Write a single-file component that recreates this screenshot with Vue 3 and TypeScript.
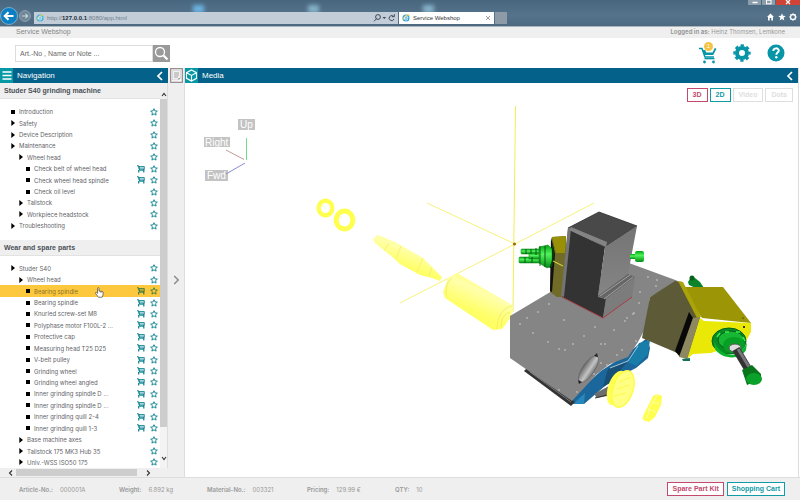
<script setup lang="ts">
import { ref } from 'vue'

interface TreeItem {
  label: string
  level: 1 | 2 | 3
  leaf?: boolean
  cart?: boolean
  active?: boolean
}

const search = ref('')
const address = 'app.html'

const manual: TreeItem[] = [
  { label: 'Introduction', level: 1, leaf: true },
  { label: 'Safety', level: 1 },
  { label: 'Device Description', level: 1 },
  { label: 'Maintenance', level: 1 },
  { label: 'Wheel head', level: 2 },
  { label: 'Check belt of wheel head', level: 3, leaf: true, cart: true },
  { label: 'Check wheel head spindle', level: 3, leaf: true, cart: true },
  { label: 'Check oil level', level: 3, leaf: true },
  { label: 'Tailstock', level: 2 },
  { label: 'Workpiece headstock', level: 2 },
  { label: 'Troubleshooting', level: 1 },
]

const part = (label: string, active = false): TreeItem => ({ label, level: 3, leaf: true, cart: true, active })

const parts: TreeItem[] = [
  { label: 'Studer S40', level: 1 },
  { label: 'Wheel head', level: 2 },
  part('Bearing spindle', true),
  part('Bearing spindle'),
  part('Knurled screw-set M8'),
  part('Polyphase motor F100L-2 ...'),
  part('Protective cap'),
  part('Measuring head T25 D25'),
  part('V-belt pulley'),
  part('Grinding wheel'),
  part('Grinding wheel angled'),
  part('Inner grinding spindle D ...'),
  part('Inner grinding spindle D ...'),
  part('Inner grinding quill 2-4'),
  part('Inner grinding quill 1-3'),
  { label: 'Base machine axes', level: 2 },
  { label: 'Tailstock 175 MK3 Hub 35', level: 2 },
  { label: 'Univ.-WSS ISO50 175', level: 2 },
]

const sections = [
  { title: 'Studer S40 grinding machine', items: manual, kind: 'manual' },
  { title: 'Wear and spare parts', items: parts, kind: 'parts' },
]

const modes = [
  { label: '3D', kind: 'pink' },
  { label: '2D', kind: 'teal' },
  { label: 'Video', kind: 'off' },
  { label: 'Dots', kind: 'off' },
]

const details = [
  { term: 'Article-No.:', value: '000001A', kind: 'd-article' },
  { term: 'Weight:', value: '6.892 kg', kind: 'd-weight' },
  { term: 'Material-No.:', value: '003321', kind: 'd-material' },
  { term: 'Pricing:', value: '129.99 €', kind: 'd-price' },
  { term: 'QTY:', value: '10', kind: 'd-qty' },
]

const specks: [number, number][] = [
  [527, 318], [538, 312], [533, 333], [549, 304], [564, 320], [548, 342], [559, 349], [573, 344], [565, 350],
  [584, 336], [595, 327], [601, 344], [605, 344], [614, 330], [625, 321], [633, 314], [617, 355], [601, 363],
  [640, 292], [648, 277], [657, 280], [636, 341], [622, 350], [577, 392], [559, 390], [607, 365], [639, 303],
  [656, 286], [520, 324], [594, 374], [627, 318], [634, 313],
]
</script>

<template>
  <div class="page">
    <header class="chrome">
      <i class="blob b1"></i><i class="blob b2"></i><i class="blob b3"></i>
      <button class="back" aria-label="Back">
        <svg viewBox="0 0 18 18"><circle cx="9" cy="9" r="8.5" fill="#0b7fc3" stroke="#a9cfe6" stroke-width=".6" /><path d="M13.5 9H5M8.5 5.2 4.7 9l3.8 3.8" fill="none" stroke="#fff" stroke-width="2" /></svg>
      </button>
      <button class="forward" aria-label="Forward">
        <svg viewBox="0 0 12 12"><circle cx="6" cy="6" r="5.4" fill="#6f8796" stroke="#9aabb8" stroke-width=".8" /><path d="M3 6h5.5M6.5 3.8 8.7 6 6.5 8.2" fill="none" stroke="#cbd5dc" stroke-width="1.1" /></svg>
      </button>
      <div class="address">
        <svg class="globe" viewBox="0 0 9 9"><circle cx="4.5" cy="4.5" r="4" fill="#3fb0d8" /><path d="M1 6.2C3 2.6 6 1 8.4 1.2" fill="none" stroke="#e9c545" stroke-width="1.1" /><path d="M2.3 4.6h4.4c0-3-4.2-3-4.2 0 0 2.6 3 2.8 4 1.3" fill="none" stroke="#e9f6fb" stroke-width="1" /></svg>
        <span class="url">http://<b>127.0.0.1</b>:8080/{{ address }}</span>
        <svg class="tools" viewBox="0 0 24 10" fill="none" stroke="#3c4a57"><circle cx="6" cy="4" r="2.4" /><path d="M4.4 5.8 2 8.4" /><path d="M10.5 4h3.6l-1.8 2z" fill="#3c4a57" stroke="none" /><path d="M21.3 3.2A2.5 2.5 0 1 0 22 6" /><path d="M22.3 1.2v2.5h-2.5" /></svg>
      </div>
      <div class="tab">
        <svg class="globe" viewBox="0 0 9 9"><circle cx="4.5" cy="4.5" r="4" fill="#2f9fd0" /><path d="M1 6.2C3 2.6 6 1 8.4 1.2" fill="none" stroke="#e9b93c" stroke-width="1.2" /><path d="M2.3 4.6h4.4c0-3-4.2-3-4.2 0 0 2.6 3 2.8 4 1.3" fill="none" stroke="#fff" /></svg>
        <span>Service Webshop</span>
        <button class="tab-close" aria-label="Close tab"><svg viewBox="0 0 6 6"><path d="m1 1 4 4M5 1 1 5" stroke="#888" stroke-width=".8" /></svg></button>
      </div>
      <button class="new-tab" aria-label="New tab"></button>
      <div class="window">
        <div class="win-buttons">
          <button class="win" aria-label="Minimize"><svg viewBox="0 0 12 6"><path d="M4 3.5h5" stroke="#fff" stroke-width="1.5" /></svg></button>
          <button class="win" aria-label="Maximize"><svg viewBox="0 0 12 6"><rect x="4" y="1.2" width="4.5" height="3.6" fill="none" stroke="#fff" /></svg></button>
          <button class="win close" aria-label="Close"><svg viewBox="0 0 12 6"><path d="m4 1 4 4M8 1 4 5" stroke="#fff" stroke-width="1.2" /></svg></button>
        </div>
        <svg class="quick" viewBox="0 0 30 8" fill="#fff"><path d="M0 4 3.5.5 7 4H6v3.500H4.300V5H2.700v2.500H1V4z" /><path d="m15 .3 1 2.500 2.700.2-2.100 1.700.7 2.700L15 5.900l-2.300 1.500.7-2.700L11.300 3l2.700-.2z" /><circle cx="26" cy="4" r="2.5" fill="none" stroke="#fff" stroke-width="1.3" /><path d="M26 .3v1.200M26 6.500v1.200M22.300 4h1.200M28.500 4h1.200M23.400 1.400l.8.8M27.800 5.800l.8.8M28.600 1.400l-.8.8M24.200 5.800l-.8.8" stroke="#fff" /></svg>
      </div>
    </header>

    <div class="titlebar">
      <h1>Service Webshop</h1>
      <p><b>Logged in as:</b> Heinz Thomsen, Lemkone</p>
    </div>

    <div class="header">
      <form class="search" @submit.prevent>
        <input v-model="search" aria-label="Search" placeholder="Art.-No , Name or Note ..." />
        <button aria-label="Search"><svg viewBox="0 0 17 17"><circle cx="7" cy="7" r="4.5" fill="none" stroke="#fff" stroke-width="1.3" /><path d="m10.5 10.5 4 4" stroke="#fff" stroke-width="2.3" /></svg></button>
      </form>
      <div class="actions">
        <button class="cart" aria-label="Cart">
          <svg viewBox="0 0 18 22"><path d="M0 6.500h3l3 8.500h9" fill="none" stroke="#0795a8" stroke-width="1.600" /><path d="M3.200 8h3l1 2.500h6.300L15.800 6l1.700.8-3.300 6.200H5.200z" fill="#0795a8" /><path d="M5.500 16.600h10" stroke="#0795a8" stroke-width="1.400" /><circle cx="5.500" cy="20" r="1.400" fill="#0795a8" /><circle cx="14.500" cy="20" r="1.400" fill="#0795a8" /></svg>
          <span class="badge">1</span>
        </button>
        <button aria-label="Settings">
          <svg viewBox="0 0 18 18"><circle cx="9" cy="9" r="5" fill="none" stroke="#0795a8" stroke-width="4" /><circle cx="9" cy="9" r="7.5" fill="none" stroke="#0795a8" stroke-width="2.4" stroke-dasharray="3.3 2.59" stroke-dashoffset="1.65" /></svg>
        </button>
        <button aria-label="Help">
          <svg viewBox="0 0 18 18"><circle cx="9" cy="9" r="8.5" fill="#0795a8" /><path d="M6.3 7c0-3.6 5.500-3.400 5.500-.4 0 2-2.500 2-2.500 4.200" fill="none" stroke="#fff" stroke-width="1.9" /><circle cx="9.3" cy="13.2" r="1.2" fill="#fff" /></svg>
        </button>
      </div>
    </div>

    <div class="body">
      <aside class="sidebar">
        <div class="bar">
          <button class="bar-icon" aria-label="Menu"><svg viewBox="0 0 13 15"><path d="M2.5 4h9M2.5 7.500h9M2.500 11h9" stroke="#fff" stroke-width="1.7" /></svg></button>
          <h2>Navigation</h2>
          <button class="collapse" aria-label="Collapse navigation"><svg viewBox="0 0 8 10"><path d="M6 1 2 5l4 4" fill="none" stroke="#fff" stroke-width="1.7" /></svg></button>
        </div>
        <div class="tree-wrap">
          <nav class="tree">
            <template v-for="section in sections" :key="section.kind">
              <h3>{{ section.title }}</h3>
              <ul :class="section.kind">
                <li v-for="(item, i) in section.items" :key="i" :class="['level-' + item.level, { active: item.active }]">
                  <svg class="marker" viewBox="0 0 4 6"><rect v-if="item.leaf" y="1" width="4" height="4" /><path v-else d="M.3 0 4 3 .3 6z" /></svg>
                  <a href="#">{{ item.label }}</a>
                  <button v-if="item.cart" class="mini" aria-label="Add to cart"><svg viewBox="0 0 8 8"><path d="M0 .8h1.500L2.500 5.200h4.300" fill="none" stroke="currentColor" stroke-width="1" /><path d="M1.800 1.500h5.500v2.700H2.400z" fill="currentColor" fill-opacity=".35" stroke="currentColor" stroke-width=".8" /><path d="M1.700 5v2.500M6.800 4v3.500" stroke="currentColor" stroke-width="1.200" /></svg></button>
                  <button class="mini" aria-label="Favourite"><svg viewBox="0 0 8 8"><path d="m4 .7.95 2.200 2.400.2-1.800 1.600.55 2.400L4 5.850 1.900 7.100l.55-2.400L.65 3.100l2.400-.2z" fill="none" stroke="currentColor" stroke-width=".9" /></svg></button>
                  <svg v-if="item.active" class="hand" viewBox="0 0 9 11"><path d="M2.600 6.300V1.400c0-1 1.400-1 1.400 0V4l3.200.5c.8.200 1 .6 1 1.300 0 1.700-.3 3-1 4.400H3.400C2.600 9 1.300 7.500.5 6.300c-.3-.8.6-1.200 1.200-.7z" fill="#fff" stroke="#444" stroke-width=".7" /><path d="M5.400 4.500v1.200M6.800 4.600v1.200" stroke="#444" stroke-width=".5" /></svg>
                </li>
              </ul>
            </template>
          </nav>
          <div class="vscroll">
            <svg viewBox="0 0 6 5"><path d="M1 4l2-2.500L5 4" fill="none" stroke="#333" stroke-width="1.1" /></svg>
            <i></i>
            <svg viewBox="0 0 6 5"><path d="M1 1l2 2.500L5 1" fill="none" stroke="#333" stroke-width="1.1" /></svg>
          </div>
        </div>
        <div class="hscroll">
          <svg viewBox="0 0 5 6"><path d="M4 .5 1.500 3 4 5.500" fill="none" stroke="#333" stroke-width="1.1" /></svg>
          <i></i>
          <svg viewBox="0 0 5 6"><path d="M1 .5 3.500 3 1 5.500" fill="none" stroke="#333" stroke-width="1.1" /></svg>
        </div>
      </aside>

      <div class="divider">
        <button class="note" aria-label="Notes"><svg viewBox="0 0 13 15"><rect x=".7" y=".7" width="11.6" height="13.6" fill="#fff" stroke="#8f8489" stroke-width="1.2" /><path d="M2.500 2.500h8v7.500l-2 2h-6z" fill="#f1f1f1" stroke="#bbb" stroke-width=".5" /><path d="M4 5h5M4 7h5M4 9h4" stroke="#999" stroke-width=".9" /><path d="M8.500 12v-2h2z" fill="#888" /></svg></button>
        <button class="expand" aria-label="Expand"><svg viewBox="0 0 7 10"><path d="m1.200 1 4 4-4 4" fill="none" stroke="#8b8b8b" stroke-width="1.5" /></svg></button>
      </div>

      <main class="media">
        <div class="bar">
          <div class="bar-icon"><svg viewBox="0 0 13 15"><path d="m6.500 2 5 2.700v5.600l-5 2.700-5-2.700V4.700zM1.500 4.700l5 2.700 5-2.700M6.500 7.400V13" fill="none" stroke="#fff" stroke-width="1.1" /></svg></div>
          <h2>Media</h2>
          <button class="collapse" aria-label="Collapse media"><svg viewBox="0 0 8 10"><path d="M6 1 2 5l4 4" fill="none" stroke="#fff" stroke-width="1.7" /></svg></button>
        </div>
        <div class="stage">
          <svg class="scene" viewBox="185 83 613 394" role="img" aria-label="Exploded view of the wheel head">
            <defs>
              <linearGradient id="tube" x1="0" y1="1" x2=".55" y2="0"><stop offset="0" stop-color="#ffff4c" /><stop offset=".45" stop-color="#ffff68" /><stop offset=".75" stop-color="#ffffac" /><stop offset="1" stop-color="#ffff66" /></linearGradient>
              <linearGradient id="bore"><stop offset="0" stop-color="#666" /><stop offset=".6" stop-color="#c4c4c4" /><stop offset="1" stop-color="#777" /></linearGradient>
              <linearGradient id="bright" x1="0" y1="0" x2="0" y2="1"><stop offset="0" stop-color="#00a414" /><stop offset=".4" stop-color="#52f35d" /><stop offset="1" stop-color="#008d12" /></linearGradient>
              <linearGradient id="side" x1="0" y1="0" x2="0" y2="1"><stop offset="0" stop-color="#747474" /><stop offset="1" stop-color="#858585" /></linearGradient>
            </defs>

            <g class="triad">
              <rect x="238" y="119" width="17" height="11" /><rect x="204" y="137" width="26" height="10" /><rect x="205" y="170" width="23" height="11" />
              <text x="240" y="128">Up</text><text x="205" y="146">Right</text><text x="207" y="179">Fwd</text>
              <path d="M246.500 138v22" stroke="#6fdd8a" /><path d="m226 150 18 9.500" stroke="#c59a9a" /><path d="m226 174 19-11" stroke="#8c8cd4" />
            </g>

            <g stroke="#f3ec3c" stroke-width=".9" fill="none"><path d="M515.500 106 513 312" /><path d="m427 203 88 41M400 303l115-59 79-41" stroke-opacity=".75" /></g>

            <g fill="none" stroke="#ffff50"><ellipse cx="325.500" cy="208" rx="6.800" ry="7.300" stroke-width="4.400" /><ellipse cx="344.500" cy="220" rx="8.300" ry="9" stroke-width="5" /><path d="M319 203l5 4M337 214l5 4M345 231l4-5" stroke="#f3f28a" stroke-width=".6" /></g>
            <path d="m373 239 4-4 6 2 14 6 26 15 9 9 10 10-2 4-8-3-12-3-20-11-10-9-15-12z" fill="url(#tube)" />
            <path d="m389 243-5 8M401 246l-5 13M423 258l-6 14M432 267l-3 9" stroke="#f1ec65" stroke-width=".7" fill="none" />
            <path d="m443 292 5-14 9-5 55 32v11l-10 13-9 1-48-32z" fill="url(#tube)" />
            <path d="M512 306c-10 2-15 12-15 23M452 278c-5 4-6 9-6 17M510 312c-8 3-9 9-9 15" stroke="#eeea61" stroke-width=".8" fill="none" />

            <path d="m647 338 3 10-2 10-12 10-24 12-28 24h-13l2-8 28-25 18-12 14-10z" fill="#1b669a" />
            <path d="m639 343 11-3-2 14-12 12-8-4z" fill="#187da9" /><path d="m608 369 20-8-18 22-7 4z" fill="#174f76" /><path d="m573 404 12-11-1 11z" fill="#2888bd" />
            <path d="m594 394 15-8-2 10-10 2z" fill="#6d6d6d" /><path d="m595 398 12-3" stroke="#333" />
            <path d="M524 371 571 406l4-4-47-35z" fill="#333" /><path d="m530 372 41 30" stroke="#777" />
            <path d="m510 316 42-25 77-28 49 18-28 16-4 30-8 15-10 15-18 7-13 10-25 27-62-43z" fill="#858585" />
            <path d="m610 368 18-7 10-15" fill="none" stroke="#a9c5d4" />
            <ellipse cx="588.500" cy="369" rx="6" ry="15.500" transform="rotate(34 588.500 369)" fill="url(#bore)" stroke="#555" stroke-width=".5" />
            <path d="m594 356 3-3 1 4zM578 380l1 4 3-2z" fill="#222" />
            <circle v-for="(s, i) in specks" :key="i" :cx="s[0]" :cy="s[1]" r=".8" fill="#d4d4d4" />

            <path d="m552 237 14-1 2 61h-11l-7-5z" fill="#716b28" /><path d="m552 237 14-1-1 17h-9z" fill="#989107" /><path d="m551 237 4 17-3 38-2-1z" fill="#111" />
            <g fill="url(#bright)" stroke="#087e17" stroke-width=".5"><rect x="521" y="249" width="25" height="5" rx="1" /><rect x="519" y="257" width="28" height="6" rx="1" /><rect x="529" y="253" width="18" height="6" /><path d="m539 247 9-2 4 4v17l-5 2-8-5z" /></g>
            <path d="M526 249v5M531 249v5M536 248v7M525 257v6M532 257v6M540 246v20M545 246v21" stroke="#064d0d" stroke-width=".9" />
            <path d="M552 245c2 6 2 15-2 23" stroke="#073b0b" stroke-width="1.5" fill="none" /><path d="m553 261 10 5" stroke="#e7e342" />
            <path d="m568 228 31-16 38 14-32 21z" fill="#494949" stroke="#2d2d2d" stroke-width=".8" />
            <path d="m568 229 37 18-7 50 8 2-3 19-41-21z" fill="#333" />
            <path d="m568 227 3 2-7 68-3-1z" fill="#747474" /><path d="m571 227 36 15-1 5-37-17z" fill="#848484" />
            <path d="m605 247 32-21-9 48-30 22z" fill="url(#side)" /><path d="m598 296 30-22 7 3-29 22z" fill="#656565" /><path d="m600 296 30-21M604 299l29-22" stroke="#a7a7a7" stroke-width=".9" />
            <path d="m606 299 29-22-3 20-29 21z" fill="#7c7c7c" /><path d="m562 297 41 21 29-21" fill="none" stroke="#a93c42" />
            <g fill="url(#bright)"><rect x="630" y="254" width="6" height="5" /><rect x="635" y="251" width="9" height="11" rx="2" /></g>

            <path d="m688 282 3-5 4 1 5 4 4 6-6 1-9-4z" fill="#0a832a" /><circle cx="692" cy="278" r="2.500" fill="#07601c" />
            <path d="m680 287 43 0 28 36-49-5z" fill="#9c9607" />
            <path d="m699 317 5 4 47 2v9l-5 9-35 12-18 1-6 5z" fill="#e9e806" />
            <path d="m650 297 25-16 7 1 18 35-13 42-12-7-33-14z" fill="#5d5a37" /><path d="m678 281 5 1 18 35-4 1z" fill="#aaa408" />
            <path d="m689 312 4 6-13 39-5-6z" fill="#080808" /><path d="m693 318 7-1-13 42-8-2z" fill="#8e8860" /><path d="m682 359 8-1v3h-7z" fill="#16715c" />
            <ellipse cx="729" cy="341" rx="17" ry="13" fill="#078d24" stroke="#046018" /><ellipse cx="731" cy="340" rx="13" ry="9" fill="#16b732" stroke="#075b19" /><path d="M714 341c5 16 27 20 33 1l-1 8c-6 11-25 9-31-1z" fill="#09b32a" /><ellipse cx="734" cy="345" rx="11" ry="8" fill="#08a024" />
            <path d="M717 337l3-4M725 332h4M736 332h4M743 337l2 4" stroke="#40ed50" stroke-width="1.5" />
            <ellipse cx="735" cy="348" rx="6" ry="4" fill="#ddd" stroke="#555" /><path d="m736 349 12 20" stroke="#333" stroke-width="8" /><path d="m738 349 11 18" stroke="#77777b" stroke-width="3" />
            <path d="m742 370 10-5 9 9 0 5-14 6z" fill="#08751a" /><ellipse cx="754" cy="379" rx="8" ry="6" fill="#0aa12a" /><circle cx="744" cy="327" r="1" /><circle cx="743" cy="318" r=".6" />

            <g fill="#ffff50"><ellipse cx="617" cy="388" rx="9" ry="18" transform="rotate(18 617 388)" /><ellipse cx="623" cy="389" rx="10" ry="19" transform="rotate(18 623 389)" fill="#ffff83" stroke="#fffb48" stroke-width="1.5" /><path d="M619 382l12-5M617 389l12-4M614 396l12-3" stroke="#fff83a" stroke-width=".8" /><path d="m643 416 10-20 4-2 5 2-1 9-6 12-6 5-6-2z" /><path d="m647 418 3-11 8-13M652 402l8 2M648 409l8 3" fill="none" stroke="#fffdaa" /></g>
            <circle cx="514.500" cy="244" r="1.600" fill="#9b6b08" />
          </svg>
          <div class="modes">
            <button v-for="m in modes" :key="m.label" :class="['outline', m.kind]" :disabled="m.kind === 'off'">{{ m.label }}</button>
          </div>
        </div>
      </main>
    </div>

    <footer class="footer">
      <dl>
        <div v-for="d in details" :key="d.kind" :class="d.kind"><dt>{{ d.term }}</dt><dd>{{ d.value }}</dd></div>
      </dl>
      <div class="footer-buttons">
        <button class="outline pink">Spare Part Kit</button>
        <button class="outline teal">Shopping Cart</button>
      </div>
    </footer>
  </div>
</template>

<style>
body { margin: 0; }
</style>

<style scoped>
* { box-sizing: border-box; margin: 0; padding: 0; }
.page { --small: 6px/11px Inter, "Liberation Sans", sans-serif; display: flex; flex-direction: column; height: 100vh; background: #fff; color: #5f6468; font: 7px/11px "Liberation Sans", Arial, sans-serif; overflow: hidden; }
svg { display: block; }
button { border: 0; background: none; font: inherit; color: inherit; cursor: pointer; flex: none; }
a { color: inherit; text-decoration: none; }
ul { list-style: none; }
i { display: block; }

.chrome { position: relative; display: flex; align-items: flex-end; height: 27px; flex: none; padding-bottom: 2px; background: linear-gradient(#48677e, #55738a 60%, #4c6980); border-bottom: 1px solid #a9b4bd; }
.blob { position: absolute; top: 5px; width: 11px; height: 8px; background: #86b2ca; filter: blur(2px); }
.b1 { left: 193px; background: #6cb4e5; }
.b2 { left: 308px; }
.b3 { left: 423px; }
.back { width: 18px; margin-bottom: -1px; }
.forward { width: 12px; margin: 0 3px 2px 1px; }
.address { position: relative; display: flex; align-items: center; flex: 0 1 364px; height: 12px; padding: 0 2px; gap: 3px; background: #c3cdd7; }
.globe { width: 8px; height: 8px; flex: none; }
.url { flex: 1; color: #71808d; font-size: 6px; }
.url b { color: #222d38; }
.tools { width: 24px; height: 10px; }
.tab { position: relative; display: flex; align-items: center; gap: 3px; width: 95px; height: 12px; margin-left: 1px; padding: 0 3px; background: #fff; color: #333; font-size: 6px; }
.tab span { flex: 1; }
.tab-close { width: 6px; }
.new-tab { width: 12px; height: 12px; margin-left: 1px; background: #8d9ba9; }
.window { margin-left: auto; height: 25px; display: flex; flex-direction: column; justify-content: space-between; align-items: flex-end; }
.win-buttons { display: flex; gap: 1px; }
.win { width: 13px; height: 6px; background: #8b9cab; }
.win svg { width: 100%; height: 6px; }
.win.close { width: 24px; background: #cf4436; }
.quick { width: 30px; height: 8px; margin: 0 3px 3px 0; }

.titlebar { display: flex; flex: none; justify-content: space-between; height: 11px; padding: 0 15px 0 16px; background: #efefef; color: #999; line-height: 10px; }
.titlebar h1 { color: #868686; font-size: 7px; font-weight: 400; }
.titlebar p { font: var(--small); line-height: 10px; }

.header { display: flex; flex: none; justify-content: space-between; align-items: center; height: 30px; padding: 0 15px; }
.search { display: flex; height: 17px; width: 155px; }
.search input { flex: 1; min-width: 0; border: 1px solid #ddd; padding: 0 4px; color: #555; font: 7px/11px "Liberation Sans", Arial, sans-serif; }
.search input::placeholder { color: #686868; opacity: 1; }
.search button { width: 17px; height: 17px; background: #999; }
.actions { display: flex; align-items: center; gap: 16px; }
.actions button { width: 18px; }
.cart { position: relative; }
.badge { position: absolute; left: 5px; top: 0; width: 9px; height: 9px; border-radius: 50%; background: #f5c343; color: #fff; font-size: 6px; line-height: 9px; text-align: center; }

.body { display: flex; flex: 1; min-height: 0; }
.bar { display: flex; align-items: center; height: 15px; flex: none; background: #046189; color: #fff; }
.bar h2 { flex: 1; padding-left: 4px; font-size: 8px; font-weight: 400; }
.bar-icon { width: 13px; height: 15px; background: #0798a5; }
.collapse { width: 8px; margin-right: 4px; }
.sidebar { display: flex; flex-direction: column; width: 168px; flex: none; }
.tree-wrap { display: flex; flex: 1; min-height: 0; background: linear-gradient(#efefef 16px, #fff 16px); }
.tree { display: flex; flex-direction: column; flex: 1; min-width: 0; }
.tree h3 { height: 16px; flex: none; padding-left: 4px; background: #efefef; border-bottom: 1px solid #e2e2e2; color: #4a5157; font-size: 7px; line-height: 16px; white-space: nowrap; }
.tree ul { display: flex; flex-direction: column; min-height: 0; background: #fff; }
.manual { flex: 11 1 0; padding: 7px 0 8px; }
.parts { flex: 18 1 0; padding-top: 7px; }
.tree li { position: relative; display: flex; flex: 1; min-height: 0; align-items: center; gap: 4px; padding-right: 2px; font: var(--small); }
.level-1 { padding-left: 11px; }
.level-2 { padding-left: 19px; }
.level-3 { padding-left: 26px; }
.tree a { flex: 1; white-space: nowrap; }
.marker { width: 4px; height: 6px; flex: none; fill: #000; }
.mini { width: 8px; color: #07818e; margin-left: 1px; }
.active { background: #fdc83e; color: #8b7428; }
.active .mini { color: #3c7a3c; }
.hand { position: absolute; left: 95px; top: 2px; width: 9px; height: 11px; z-index: 1; }
.vscroll { display: flex; flex-direction: column; align-items: center; width: 8px; padding: 9px 0 7px; background: linear-gradient(#efefef 16px, #f3f3f3 16px); border-right: 1px solid #ddd; }
.vscroll svg { width: 6px; height: 5px; }
.vscroll i { flex: 1; width: 7px; margin: 2px 0 29px; background: #cdcdcd; }
.hscroll { display: flex; align-items: center; height: 9px; flex: none; padding: 0 17px 0 8px; background: #efefef; }
.hscroll svg { width: 5px; height: 6px; }
.hscroll i { flex: 1; height: 7px; margin: 0 9px 0 3px; background: #cdcdcd; }

.divider { display: flex; flex-direction: column; align-items: center; width: 17px; flex: none; background: #efefef; border-right: 1px solid #ddd; }
.note { width: 13px; height: 15px; }
.expand { width: 7px; margin: auto; }
.media { display: flex; flex-direction: column; flex: 1; min-width: 0; margin-right: 1px; border-right: 1px solid #ddd; }
.stage { display: grid; flex: 1; min-height: 0; }
.scene { grid-area: 1 / 1; width: 100%; height: 100%; min-height: 0; }
.modes { grid-area: 1 / 1; display: flex; gap: 2px; justify-self: end; align-self: start; padding: 5px 5px 0 0; }
.outline { height: 14px; padding: 0 5px; border: 1px solid; background: #fff; font-size: 7px; font-weight: 700; line-height: 12px; }
.pink { color: #c34a6d; }
.teal { color: #129aa5; }
.off { color: #dedede; }
.triad rect { fill: #c3c3c3; }
.triad text { fill: #fff; font: 10px "Liberation Sans", Arial, sans-serif; }

.footer { display: flex; flex: none; align-items: center; justify-content: space-between; height: 23px; padding: 0 15px 0 19px; background: #efefef; border-top: 1px solid #ddd; color: #999; }
.footer dl { display: flex; font: var(--small); }
.footer dl div { display: flex; gap: 7px; }
.footer dt { font-weight: 600; }
.d-article { width: 100px; }
.d-weight { width: 88px; }
.d-material { width: 100px; }
.d-price { width: 88px; }
.footer-buttons { display: flex; gap: 3px; }
.footer-buttons .outline { padding: 0 4px; }
</style>
